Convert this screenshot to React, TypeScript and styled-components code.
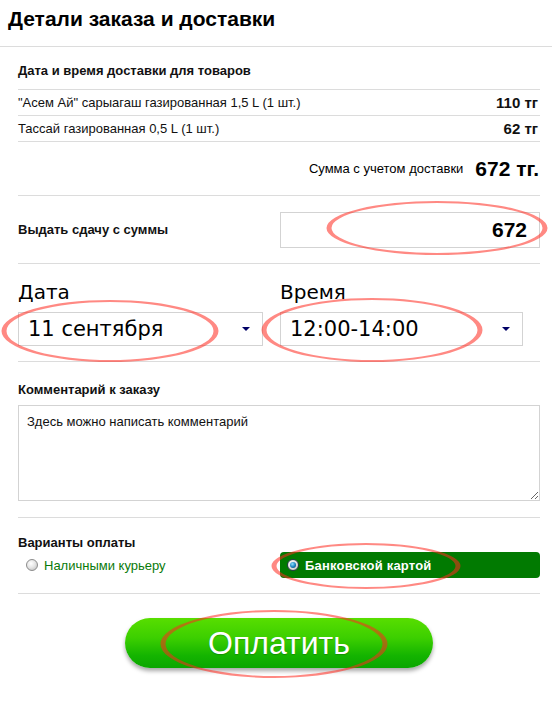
import React from 'react';
import styled, { createGlobalStyle } from 'styled-components';

const GlobalStyle = createGlobalStyle`
  html, body { margin: 0; padding: 0; background: #fff; }
  body { font-family: "Liberation Sans", Arial, sans-serif; color: #000; }
  * { box-sizing: border-box; }
`;

const Page = styled.div`
  position: relative;
  width: 552px;
  min-height: 719px;
  overflow: hidden;
`;

const Title = styled.h1`
  margin: 0;
  padding: 7px 0 15px 8px;
  font: bold 21px/24px "Liberation Sans", Arial, sans-serif;
  border-bottom: 1px solid #dcdcdc;
`;

const Body = styled.div`
  padding: 0 12px 0 18px;
`;

const Label = styled.div`
  font: bold 13px/15px "Liberation Sans", Arial, sans-serif;
  color: #111;
`;

const CartHead = styled(Label)`
  padding: 16px 0 11px;
`;

const ItemRow = styled.div`
  display: flex;
  justify-content: space-between;
  align-items: center;
  height: 26px;
  border-top: 1px solid #dcdcdc;
  font-size: 13px;
  color: #111;
`;

const Price = styled.span`
  font-weight: bold;
  font-size: 15px;
  padding-right: 2px;
`;

const SumRow = styled.div`
  display: flex;
  justify-content: flex-end;
  align-items: center;
  gap: 12px;
  height: 54px;
  border-top: 1px solid #dcdcdc;
  font-size: 13px;
`;

const Total = styled.span`
  font-weight: bold;
  font-size: 21px;
  padding-right: 1px;
`;

const ChangeRow = styled.div`
  display: flex;
  justify-content: space-between;
  align-items: center;
  height: 68px;
  border-top: 1px solid #dcdcdc;
`;

const AmountInput = styled.input`
  width: 260px;
  height: 36px;
  border: 1px solid #d3d3d3;
  padding: 0 12px;
  text-align: right;
  font: bold 21px "Liberation Sans", Arial, sans-serif;
  color: #000;
  outline: none;
`;

const Section = styled.div<{ $top: number; $bottom: number }>`
  border-top: 1px solid #dcdcdc;
  padding: ${(p) => p.$top}px 0 ${(p) => p.$bottom}px;
`;

const PickGrid = styled.div`
  display: grid;
  grid-template-columns: 245px 243px;
  column-gap: 17px;
`;

const Field = styled.div`
  display: flex;
  flex-direction: column;
  gap: 9px;
`;

const BigLabel = styled.div`
  font: 20px/22px "DejaVu Sans", Verdana, sans-serif;
  color: #000;
`;

const SelectWrap = styled.div`
  position: relative;
  height: 34px;
  &::after {
    content: '';
    position: absolute;
    right: 13px;
    top: 15px;
    border-left: 4px solid transparent;
    border-right: 4px solid transparent;
    border-top: 4px solid #000066;
    pointer-events: none;
  }
`;

const Select = styled.select`
  appearance: none;
  width: 100%;
  height: 100%;
  border: 1px solid #d3d3d3;
  background: #fff;
  padding: 0 0 0 9px;
  font: 21px "DejaVu Sans", Verdana, sans-serif;
  color: #000;
  outline: none;
`;

const Comment = styled.textarea`
  display: block;
  width: 100%;
  height: 96px;
  margin-top: 8px;
  border: 1px solid #d3d3d3;
  padding: 8px 8px;
  font: 13px/16px "Liberation Sans", Arial, sans-serif;
  color: #111;
  resize: both;
  outline: none;
`;

const PayRow = styled.div`
  display: grid;
  grid-template-columns: 262px 1fr;
  height: 26px;
  margin-top: 2px;
`;

const PayOption = styled.label<{ $active?: boolean }>`
  display: flex;
  align-items: center;
  gap: 6px;
  padding-left: ${(p) => (p.$active ? 7 : 8)}px;
  border-radius: 4px;
  background: ${(p) => (p.$active ? '#017a01' : 'transparent')};
  color: ${(p) => (p.$active ? '#fff' : '#0a7a0a')};
  font: ${(p) => (p.$active ? 'bold' : 'normal')} 13px "Liberation Sans", Arial, sans-serif;
  letter-spacing: ${(p) => (p.$active ? '0.2px' : '0')};
`;

const Radio = styled.span<{ $checked?: boolean }>`
  position: relative;
  width: 12px;
  height: 12px;
  border-radius: 50%;
  border: 1px solid ${(p) => (p.$checked ? '#2a3a4a' : '#8c8c8c')};
  background: radial-gradient(circle at 40% 35%, #ffffff 0%, #e6e6e6 45%, #b9b9b9 100%);
  &::after {
    content: '';
    display: ${(p) => (p.$checked ? 'block' : 'none')};
    position: absolute;
    left: 2px;
    top: 2px;
    width: 6px;
    height: 6px;
    border-radius: 50%;
    background: radial-gradient(circle at 40% 35%, #8fe0ff 0%, #1780c0 55%, #06335a 100%);
  }
`;

const ButtonArea = styled.div`
  display: flex;
  justify-content: center;
  border-top: 1px solid #dcdcdc;
  padding-top: 24px;
`;

const PayButton = styled.button`
  width: 308px;
  height: 50px;
  border: none;
  border-radius: 25px;
  background: linear-gradient(#58de00 0%, #3ccf00 40%, #14b400 75%, #0aa600 100%);
  box-shadow: 0 3px 4px rgba(0, 0, 0, 0.35);
  color: #fff;
  font: 32px "Liberation Sans", Arial, sans-serif;
  text-shadow: 0 1px 1px rgba(0, 60, 0, 0.3);
  cursor: pointer;
`;

const Marks = styled.svg`
  position: absolute;
  left: 0;
  top: 0;
  pointer-events: none;
`;

type MarkProps = { cx: number; cy: number; rx: number; ry: number };

// hand-drawn looking ring: thicker on the sides, thin at top and bottom
const Mark = ({ cx, cy, rx, ry }: MarkProps) => {
  const ring = (a: number, b: number) =>
    `M${cx - a},${cy} a${a},${b} 0 1,0 ${2 * a},0 a${a},${b} 0 1,0 ${-2 * a},0 Z`;
  return (
    <path
      d={ring(rx + 2.5, ry + 1) + ' ' + ring(rx - 2.5, ry - 1)}
      fillRule="evenodd"
      fill="rgba(255, 40, 30, 0.55)"
    />
  );
};

const items = [
  { name: '"Асем Ай" сарыагаш газированная 1,5 L (1 шт.)', price: '110 тг' },
  { name: 'Тассай газированная 0,5 L (1 шт.)', price: '62 тг' },
];

export default function App() {
  return (
    <Page>
      <GlobalStyle />
      <Title>Детали заказа и доставки</Title>
      <Body>
        <CartHead>Дата и время доставки для товаров</CartHead>
        {items.map((it) => (
          <ItemRow key={it.name}>
            <span>{it.name}</span>
            <Price>{it.price}</Price>
          </ItemRow>
        ))}
        <SumRow>
          <span>Сумма с учетом доставки</span>
          <Total>672 тг.</Total>
        </SumRow>
        <ChangeRow>
          <Label>Выдать сдачу с суммы</Label>
          <AmountInput defaultValue="672" />
        </ChangeRow>
        <Section $top={17} $bottom={15}>
          <PickGrid>
            <Field>
              <BigLabel>Дата</BigLabel>
              <SelectWrap>
                <Select defaultValue="11">
                  <option value="11">11 сентября</option>
                </Select>
              </SelectWrap>
            </Field>
            <Field>
              <BigLabel>Время</BigLabel>
              <SelectWrap>
                <Select defaultValue="12">
                  <option value="12">12:00-14:00</option>
                </Select>
              </SelectWrap>
            </Field>
          </PickGrid>
        </Section>
        <Section $top={20} $bottom={16}>
          <Label>Комментарий к заказу</Label>
          <Comment defaultValue="Здесь можно написать комментарий" />
        </Section>
        <Section $top={17} $bottom={15}>
          <Label>Варианты оплаты</Label>
          <PayRow>
            <PayOption>
              <Radio />
              Наличными курьеру
            </PayOption>
            <PayOption $active>
              <Radio $checked />
              Банковской картой
            </PayOption>
          </PayRow>
        </Section>
        <ButtonArea>
          <PayButton>Оплатить</PayButton>
        </ButtonArea>
      </Body>
      <Marks width="552" height="719">
        <Mark cx={437} cy={228} rx={108} ry={26} />
        <Mark cx={110} cy={331} rx={106} ry={30} />
        <Mark cx={372} cy={330} rx={108} ry={31} />
        <Mark cx={366} cy={566} rx={92} ry={22} />
        <Mark cx={274} cy={644} rx={111} ry={33} />
      </Marks>
    </Page>
  );
}
